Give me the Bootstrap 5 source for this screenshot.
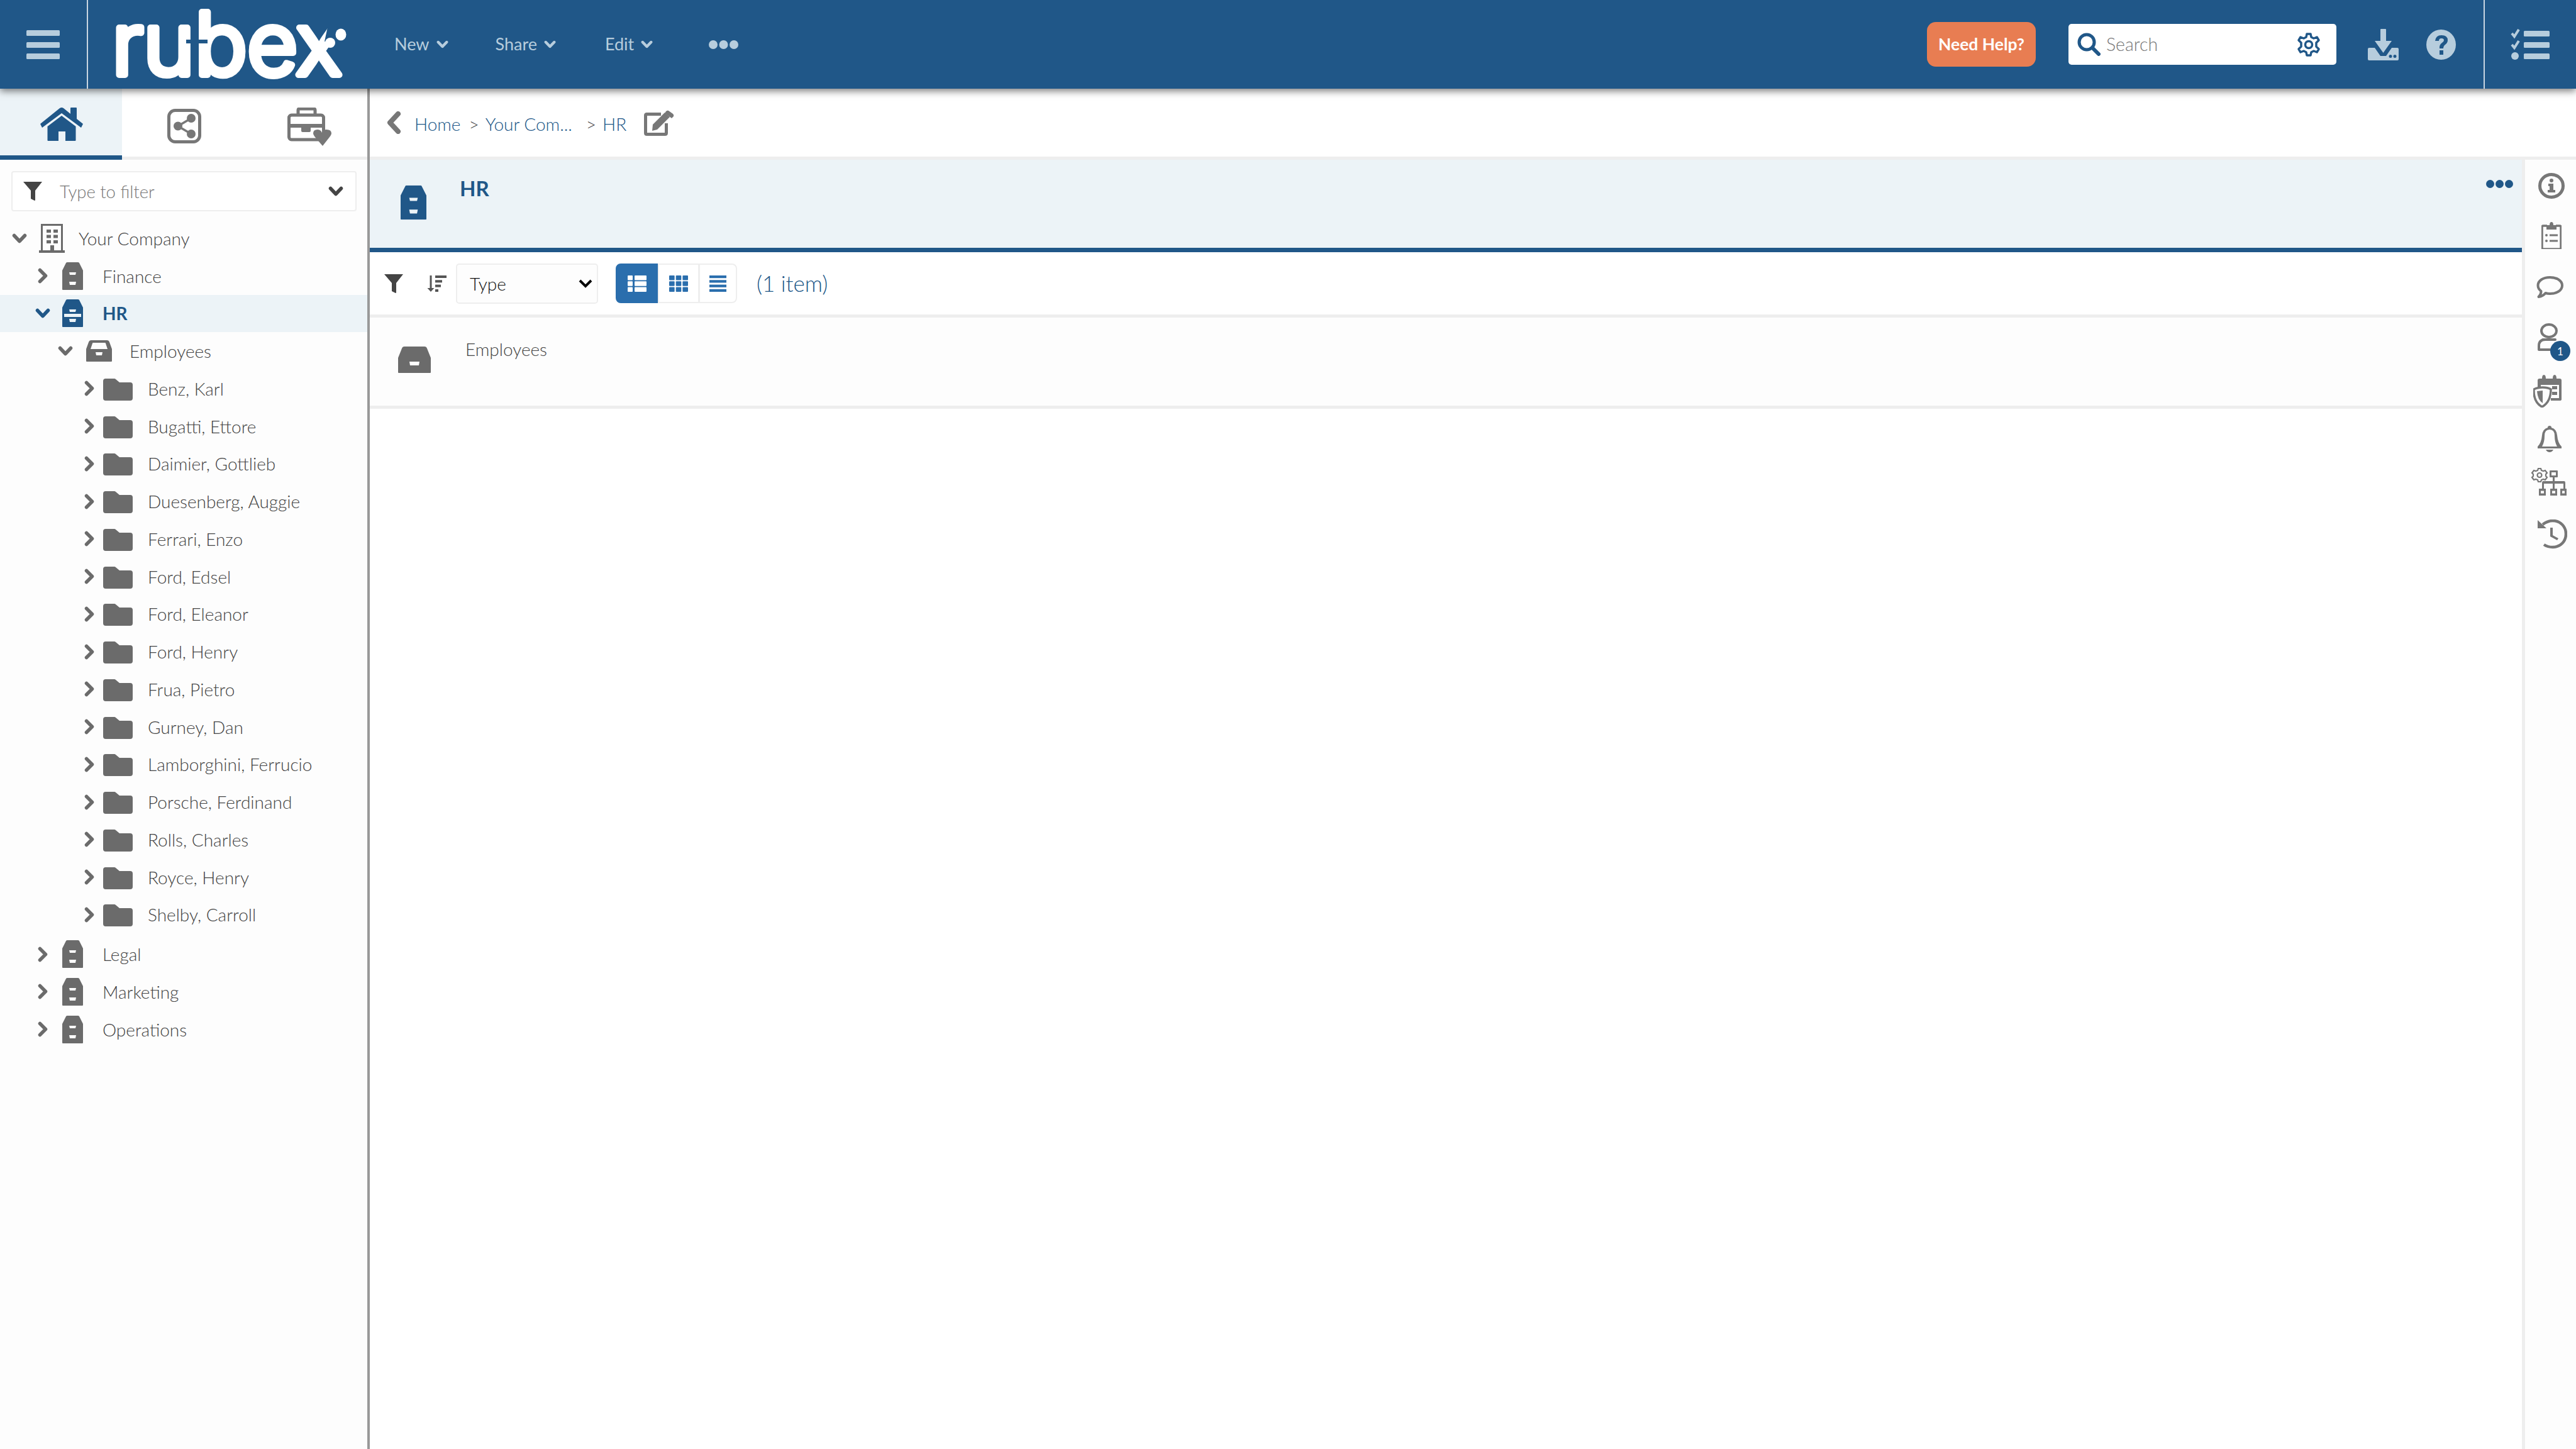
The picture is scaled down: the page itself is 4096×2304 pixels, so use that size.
<!doctype html>
<html lang="en">
<head>
<meta charset="utf-8">
<title>Rubex</title>
<link href="https://cdn.jsdelivr.net/npm/bootstrap@5.3.0/dist/css/bootstrap.min.css" rel="stylesheet">
<style>
:root{--rb:#205788;--pale:#b7cddd;--ico:#6b6b6b;--line:#eeeeee;--tint:#ecf3f7}
body{font-family:"Lato","Liberation Sans",sans-serif;font-weight:300;font-size:28px;color:#444;background:#fff;overflow:hidden}
svg{display:block;flex:none;fill:currentColor}
.top-bar{height:141px;background:var(--rb);color:var(--pale);position:relative;z-index:5;box-shadow:0 4px 11px rgba(0,0,0,.5);padding:0}
.burger-cell{width:140px;height:141px;border-right:2px solid #c9d6e2;padding-left:42px}
.logo-svg{margin-left:36px;overflow:visible}
.logo-word{font-family:"Inter",sans-serif;font-weight:300;font-size:138px;fill:#fff;stroke:#fff;stroke-width:10px;stroke-linejoin:round}
.logo-cut{fill:var(--rb)}
.menu-item{color:var(--pale);font-size:27px;font-weight:400;border:0;padding:0;background:none;display:flex;align-items:center;gap:11px}
.menu-item:hover{color:var(--pale)}
.mi-new{margin-left:66px}.mi-share{margin-left:75px}.mi-edit{margin-left:78px}.mi-more{margin-left:89px}
.help-btn{width:173px;height:71px;background:#e87d52;border:0;border-radius:14px;color:#fff;font-size:26.500px;font-weight:700;padding:0;margin-left:auto}
.help-btn:hover{background:#e87d52;color:#fff}
.search-box{width:426px;height:65px;background:#fff;border-radius:5px;margin-left:52px;padding:0 25px 0 14px;color:var(--rb)}
.search-txt{color:#777;font-size:28.500px;margin-left:9px;margin-right:auto}
.dl-ico{margin-left:50px}.q-ico{margin-left:44px}
.tasks-cell{margin-left:44px;width:147px;height:141px;border-left:2px solid #c9d6e2;padding-left:41px}
.app-body{height:2163px}
.side-col{width:588px;border-right:4px solid #999;background:#fdfdfd}
.tab-row{height:113px;background:#fff}
.tab-cell{height:113px;border-bottom:5px solid var(--line);color:#777}
.tab-1{width:194px;background:var(--tint);border-bottom:7px solid var(--rb);color:var(--rb);padding-left:64px;padding-top:30px}
.tab-2{width:191px;padding-left:72px;padding-top:32px}
.tab-3{flex:1;padding-left:72px;padding-top:30px}
.filter-box{margin:18px 17px 13px 18px;height:64px;border:2px solid var(--line);background:#fff;border-radius:4px;padding:0 18px 0 16px;color:#444}
.filter-txt{color:#777;font-size:27.500px;margin-left:27px;margin-right:auto;padding-top:2px}
.tree-list{list-style:none;margin:0;padding:0}
.t-row{height:59.75px;display:flex;align-items:center;color:#444;white-space:nowrap}
.t-row .ic{color:var(--ico)}
.t-row.on{background:var(--tint);color:var(--rb);font-weight:700}
.t-row.on .ic{color:var(--rb)}
.gap-top{margin-top:3px}
.chev-slot{width:28px;display:flex;justify-content:center;color:var(--ico)}
.on .chev-slot{color:var(--rb)}
.l0{padding-left:17px}.l0 .ic{margin-left:17px}.l0 .tx{margin-left:22px}
.l1{padding-left:54px}.l1 .ic{margin-left:17px}.l1 .tx{margin-left:31px}
.l2{padding-left:90px}.l2 .ic{margin-left:19px}.l2 .tx{margin-left:28px}
.l3{padding-left:128px}.l3 .ic{margin-left:8px;margin-top:3px}.l3 .tx{margin-left:24px}
.crumb-row{height:113px;border-bottom:5px solid var(--line);padding-left:26px;background:#fff}
.crumb-back{color:#777}
.crumb-list{margin:3px 0 0 21px;font-size:28px}
.crumb-list a{color:#205788;text-decoration:none}
.sep{color:#444;margin:0 10px 0 13px}
.sep-b{margin-left:22px}
.edit-ico{margin-left:28px;color:#777}
.work-col{border-right:5px solid var(--line)}
.title-band{height:147px;background:var(--tint);border-bottom:7px solid var(--rb);color:var(--rb)}
.title-ico{margin:40px 0 0 49px}
.title-txt{margin:21px 0 0 53px;font-size:33px;font-weight:700}
.title-dots{margin:32px 14px 0 auto}
.tool-row{height:104px;border-bottom:5px solid var(--line);padding-left:23px}
.tool-funnel{color:#444}
.tool-sort{margin-left:38px;color:#555}
.type-select{width:226px;height:64px;margin-left:15px;border:2px solid var(--line);border-radius:5px;background-color:#fdfdfd;font-family:inherit;font-weight:300;font-size:28px;color:#111;padding:0 40px 0 20px;background-size:22px 14px;background-position:right 7px center;background-image:url("data:image/svg+xml,%3Csvg xmlns='http://www.w3.org/2000/svg' viewBox='0 0 22 14'%3E%3Cpath d='M2 2l9 9 9-9' fill='none' stroke='%23000' stroke-width='4'/%3E%3C/svg%3E")}
.view-group{margin-left:28px;height:63px}
.view-btn{height:63px;padding:0;background:#fff;border:2px solid var(--line);color:#2a6ead;display:flex;align-items:center;justify-content:center;border-radius:8px}
.view-btn.w1{width:68px;background:#2a6ead;border-color:#2a6ead;color:#fff}
.view-btn.w2{width:66px}.view-btn.w3{width:61px}
.count-txt{margin-left:31px;font-size:35px;color:#205788}
.item-row{height:145px;border-bottom:5px solid var(--line);background:#fdfdfd}
.item-ico{margin:46px 0 0 45px;color:var(--ico)}
.item-txt{margin:29px 0 0 55px}
.rail{width:81px;background:#fdfdfd;color:#777}
.rail>*{position:relative}
.ri1{margin:21px 0 0 21px}.ri2{margin:37px 0 0 26px}.ri3{margin:43px 0 0 18px}.ri4{margin:37px 0 0 20px}
.ri5{margin:38px 0 0 13px}.ri6{margin:29px 0 0 20px}.ri7{margin:25px 0 0 9px}.ri8{margin:38px 0 0 20px}
.user-wrap{width:32px;height:44px}
.count-badge{position:absolute;left:20px;top:28px;width:32px;height:32px;border-radius:50%;background:var(--rb);color:#fff;font-size:17px;font-weight:400;display:flex;align-items:center;justify-content:center;padding:0}
</style>
</head>
<body>
<svg width="0" height="0" class="position-absolute">
<defs>
<symbol id="chev-r" viewBox="0 0 16 25"><path d="M3.500 3.500l9 9-9 9" fill="none" stroke="currentColor" stroke-width="5.500" stroke-linecap="round" stroke-linejoin="round"/></symbol>
<symbol id="chev-d" viewBox="0 0 24 16"><path d="M3.500 3.500l8.500 9 8.500-9" fill="none" stroke="currentColor" stroke-width="5.500" stroke-linecap="round" stroke-linejoin="round"/></symbol>
<symbol id="cabinet" viewBox="0 0 33 44"><path fill-rule="evenodd" d="M8 0h17q2 0 2.500 2L33 13v30a1 1 0 0 1-1 1H1a1 1 0 0 1-1-1V13L5.500 2Q6 0 8 0zM11 16l1 4h9l1-4zM11 31l1 5h9l1-5z"/></symbol>
<symbol id="drawer" viewBox="0 0 41 34"><path fill-rule="evenodd" d="M8 0h25q3 0 4 3l4 11v19a1 1 0 0 1-1 1H1a1 1 0 0 1-1-1V14L4 3q1-3 4-3zM7 14h27l-3-9a1 1 0 0 0-1-1H11a1 1 0 0 0-1 1zM15 19l1 5h9l1-5z"/></symbol>
<symbol id="drawer-solid" viewBox="0 0 52 42"><path fill-rule="evenodd" d="M10 0h32q3 0 4 3l6 15v23a1 1 0 0 1-1 1H1a1 1 0 0 1-1-1V18L6 3q1-3 4-3zM18 24l1 6h14l1-6z"/></symbol>
<symbol id="folder" viewBox="0 0 47 35"><path d="M4 0h14q1 0 2 1l6 5h17q4 0 4 4v21q0 4-4 4H4q-4 0-4-4V4q0-4 4-4z"/></symbol>
<symbol id="funnel" viewBox="0 0 30 30"><path d="M0 0h30L19 14v15q0 1-1 1l-6-3V14z"/></symbol>
</defs>
</svg>

<nav class="navbar top-bar d-flex flex-nowrap align-items-center justify-content-start">
  <div class="burger-cell d-flex align-items-center">
    <svg width="53" height="46" viewBox="0 0 53 46"><rect width="53" height="9" rx="1.500"/><rect y="19" width="53" height="9" rx="1.500"/><rect y="37" width="53" height="9" rx="1.500"/></svg>
  </div>
  <svg class="logo-svg" width="385" height="141" viewBox="0 0 385 141"><text class="logo-word" x="2" y="119" textLength="366" lengthAdjust="spacingAndGlyphs">rubex</text><rect class="logo-cut" x="120" y="63" width="34" height="6"/><path class="logo-cut" d="M346 38h39v42h-23l-2-14h-20z"/><ellipse cx="366" cy="55" rx="8.500" ry="9.500" fill="#fff"/><circle cx="349" cy="68" r="8" fill="#fff"/></svg>
  <button class="btn menu-item mi-new">New <svg width="19" height="13" viewBox="0 0 24 16"><use href="#chev-d"/></svg></button>
  <button class="btn menu-item mi-share">Share <svg width="19" height="13" viewBox="0 0 24 16"><use href="#chev-d"/></svg></button>
  <button class="btn menu-item mi-edit">Edit <svg width="19" height="13" viewBox="0 0 24 16"><use href="#chev-d"/></svg></button>
  <svg class="mi-more" width="47" height="14" viewBox="0 0 47 14"><circle cx="7" cy="7" r="7"/><circle cx="23.500" cy="7" r="7"/><circle cx="40" cy="7" r="7"/></svg>
  <button class="btn help-btn">Need Help?</button>
  <div class="search-box d-flex align-items-center">
    <svg width="37" height="37" viewBox="0 0 37 37"><circle cx="15" cy="15" r="12" fill="none" stroke="currentColor" stroke-width="5"/><path d="M24 24l10 10" stroke="currentColor" stroke-width="6" stroke-linecap="round"/></svg>
    <span class="search-txt">Search</span>
    <svg width="38" height="38" viewBox="0 0 38 38"><circle cx="19" cy="19" r="5.500" fill="none" stroke="currentColor" stroke-width="3.500"/><path d="M16 2h6l1 5 4 2 5-2 3 5-4 4v6l4 4-3 5-5-2-4 2-1 5h-6l-1-5-4-2-5 2-3-5 4-4v-6L3 12l3-5 5 2 4-2z" fill="none" stroke="currentColor" stroke-width="3.500" stroke-linejoin="round"/></svg>
  </div>
  <svg class="dl-ico" width="49" height="50" viewBox="0 0 49 50"><path d="M20 1q0-1 1-1h7q1 0 1 1v18h9L24.500 38 11 19h9z"/><path fill-rule="evenodd" d="M2 30h9l9 13h9l9-13h9q2 0 2 2v16q0 2-2 2H2q-2 0-2-2V32q0-2 2-2zM36 41a2.500 2.500 0 1 0 0 5 2.500 2.500 0 0 0 0-5zM43 41a2.500 2.500 0 1 0 0 5 2.500 2.500 0 0 0 0-5z"/></svg>
  <svg class="q-ico" width="47" height="48" viewBox="0 0 47 48"><path fill-rule="evenodd" d="M23.500 0a23.500 24 0 1 1 0 48 23.500 24 0 0 1 0-48zM21 33v7h6v-7zM14 18h6q0-4 4-4t4 3q0 2-3 4-4 3-4 7v2h6v-1q0-3 3-5 4-3 4-7 0-8-10-8-9 0-10 9z"/></svg>
  <div class="tasks-cell d-flex align-items-center">
    <svg width="62" height="50" viewBox="0 0 62 50"><path d="M2 7l4 5 7-11" fill="none" stroke="currentColor" stroke-width="4"/><path d="M2 25l4 5 7-11" fill="none" stroke="currentColor" stroke-width="4"/><circle cx="7" cy="43" r="6"/><rect x="21" y="3" width="41" height="9" rx="1.500"/><rect x="21" y="21" width="41" height="9" rx="1.500"/><rect x="21" y="39" width="41" height="9" rx="1.500"/></svg>
  </div>
</nav>

<div class="app-body d-flex">
  <aside class="side-col flex-shrink-0">
    <div class="tab-row d-flex">
      <div class="tab-cell tab-1">
        <svg width="68" height="53" viewBox="0 0 68 53"><path d="M31 1q3-2 6 0l11 9V1q0-1 1-1h8q1 0 1 1v17l10 8-3 6L34 9 3 32l-3-6z"/><path d="M34 13l22.500 17v22a1 1 0 0 1-1 1H40V38H29v15H12.500a1 1 0 0 1-1-1V30z"/></svg>
      </div>
      <div class="tab-cell tab-2">
        <svg width="54" height="55" viewBox="0 0 54 55"><rect x="2.500" y="2.500" width="49" height="50" rx="10" fill="none" stroke="currentColor" stroke-width="5"/><circle cx="38" cy="15" r="7"/><circle cx="17" cy="27.500" r="7"/><circle cx="38" cy="40" r="7"/><path d="M38 15L17 27.500 38 40" fill="none" stroke="currentColor" stroke-width="3.500"/></svg>
      </div>
      <div class="tab-cell tab-3">
        <svg width="70" height="61" viewBox="0 0 70 61"><path d="M17 11V4q0-2 2-2h23q2 0 2 2v7" fill="none" stroke="currentColor" stroke-width="5"/><rect x="2.500" y="12" width="55" height="39" rx="4" fill="none" stroke="currentColor" stroke-width="5"/><rect x="2" y="26" width="56" height="6"/><rect x="22" y="30" width="15" height="9" rx="2"/><path d="M56 61L44 47q-3-4-3-6 0-6 7-6 5 0 7 5 2-5 7-5 8 0 8 6 0 2-3 6z"/></svg>
      </div>
    </div>
    <div class="filter-box d-flex align-items-center">
      <svg class="tool-funnel" width="32" height="30"><use href="#funnel"/></svg>
      <span class="filter-txt">Type to filter</span>
      <svg width="26" height="16"><use href="#chev-d"/></svg>
    </div>
    <ul class="tree-list">
      <li class="t-row l0"><span class="chev-slot"><svg width="24" height="16"><use href="#chev-d"/></svg></span>
        <svg class="ic" width="41" height="46" viewBox="0 0 41 46"><path fill-rule="evenodd" d="M3 0h35v42h3v4H0v-4h3zM6 3v39h12v-8h6v8h11V3zM12 9h7v5h-7zM23 9h7v5h-7zM12 17.500h7v5h-7zM23 17.500h7v5h-7zM12 26h7v5h-7zM23 26h7v5h-7z"/></svg>
        <span class="tx">Your Company</span></li>
      <li class="t-row l1"><span class="chev-slot"><svg width="16" height="25"><use href="#chev-r"/></svg></span><svg class="ic" width="33" height="44"><use href="#cabinet"/></svg><span class="tx">Finance</span></li>
      <li class="t-row l1 on"><span class="chev-slot"><svg width="24" height="16"><use href="#chev-d"/></svg></span>
        <svg class="ic" width="33" height="44" viewBox="0 0 33 44"><use href="#cabinet" width="33" height="44"/><path d="M3 23h27v5H3z" fill="#ecf3f7"/></svg><span class="tx">HR</span></li>
      <li class="t-row l2"><span class="chev-slot"><svg width="24" height="16"><use href="#chev-d"/></svg></span><svg class="ic" width="41" height="34"><use href="#drawer"/></svg><span class="tx">Employees</span></li>
      <li class="t-row l3"><span class="chev-slot"><svg width="16" height="25"><use href="#chev-r"/></svg></span><svg class="ic" width="47" height="35"><use href="#folder"/></svg><span class="tx">Benz, Karl</span></li>
      <li class="t-row l3"><span class="chev-slot"><svg width="16" height="25"><use href="#chev-r"/></svg></span><svg class="ic" width="47" height="35"><use href="#folder"/></svg><span class="tx">Bugatti, Ettore</span></li>
      <li class="t-row l3"><span class="chev-slot"><svg width="16" height="25"><use href="#chev-r"/></svg></span><svg class="ic" width="47" height="35"><use href="#folder"/></svg><span class="tx">Daimier, Gottlieb</span></li>
      <li class="t-row l3"><span class="chev-slot"><svg width="16" height="25"><use href="#chev-r"/></svg></span><svg class="ic" width="47" height="35"><use href="#folder"/></svg><span class="tx">Duesenberg, Auggie</span></li>
      <li class="t-row l3"><span class="chev-slot"><svg width="16" height="25"><use href="#chev-r"/></svg></span><svg class="ic" width="47" height="35"><use href="#folder"/></svg><span class="tx">Ferrari, Enzo</span></li>
      <li class="t-row l3"><span class="chev-slot"><svg width="16" height="25"><use href="#chev-r"/></svg></span><svg class="ic" width="47" height="35"><use href="#folder"/></svg><span class="tx">Ford, Edsel</span></li>
      <li class="t-row l3"><span class="chev-slot"><svg width="16" height="25"><use href="#chev-r"/></svg></span><svg class="ic" width="47" height="35"><use href="#folder"/></svg><span class="tx">Ford, Eleanor</span></li>
      <li class="t-row l3"><span class="chev-slot"><svg width="16" height="25"><use href="#chev-r"/></svg></span><svg class="ic" width="47" height="35"><use href="#folder"/></svg><span class="tx">Ford, Henry</span></li>
      <li class="t-row l3"><span class="chev-slot"><svg width="16" height="25"><use href="#chev-r"/></svg></span><svg class="ic" width="47" height="35"><use href="#folder"/></svg><span class="tx">Frua, Pietro</span></li>
      <li class="t-row l3"><span class="chev-slot"><svg width="16" height="25"><use href="#chev-r"/></svg></span><svg class="ic" width="47" height="35"><use href="#folder"/></svg><span class="tx">Gurney, Dan</span></li>
      <li class="t-row l3"><span class="chev-slot"><svg width="16" height="25"><use href="#chev-r"/></svg></span><svg class="ic" width="47" height="35"><use href="#folder"/></svg><span class="tx">Lamborghini, Ferrucio</span></li>
      <li class="t-row l3"><span class="chev-slot"><svg width="16" height="25"><use href="#chev-r"/></svg></span><svg class="ic" width="47" height="35"><use href="#folder"/></svg><span class="tx">Porsche, Ferdinand</span></li>
      <li class="t-row l3"><span class="chev-slot"><svg width="16" height="25"><use href="#chev-r"/></svg></span><svg class="ic" width="47" height="35"><use href="#folder"/></svg><span class="tx">Rolls, Charles</span></li>
      <li class="t-row l3"><span class="chev-slot"><svg width="16" height="25"><use href="#chev-r"/></svg></span><svg class="ic" width="47" height="35"><use href="#folder"/></svg><span class="tx">Royce, Henry</span></li>
      <li class="t-row l3"><span class="chev-slot"><svg width="16" height="25"><use href="#chev-r"/></svg></span><svg class="ic" width="47" height="35"><use href="#folder"/></svg><span class="tx">Shelby, Carroll</span></li>
      <li class="t-row l1 gap-top"><span class="chev-slot"><svg width="16" height="25"><use href="#chev-r"/></svg></span><svg class="ic" width="33" height="44"><use href="#cabinet"/></svg><span class="tx">Legal</span></li>
      <li class="t-row l1"><span class="chev-slot"><svg width="16" height="25"><use href="#chev-r"/></svg></span><svg class="ic" width="33" height="44"><use href="#cabinet"/></svg><span class="tx">Marketing</span></li>
      <li class="t-row l1"><span class="chev-slot"><svg width="16" height="25"><use href="#chev-r"/></svg></span><svg class="ic" width="33" height="44"><use href="#cabinet"/></svg><span class="tx">Operations</span></li>
    </ul>
  </aside>

  <main class="flex-grow-1 d-flex flex-column">
    <div class="crumb-row d-flex align-items-center">
      <svg class="crumb-back" width="24" height="36" viewBox="0 0 24 36"><path d="M19 4L6 18l13 14" fill="none" stroke="currentColor" stroke-width="8" stroke-linecap="round" stroke-linejoin="round"/></svg>
      <div class="crumb-list d-flex align-items-center">
        <a href="#">Home</a><span class="sep">&gt;</span><a href="#">Your Com...</a><span class="sep sep-b">&gt;</span><a href="#">HR</a>
      </div>
      <svg class="edit-ico" width="48" height="41" viewBox="0 0 48 41"><path d="M27 6.500H4.500q-2 0-2 2v28q0 2 2 2h29q2 0 2-2V21" fill="none" stroke="currentColor" stroke-width="5"/><path d="M13 33l1-10L33 4l8 7-20 20z"/><path d="M35 2q2-2 4-1l7 5q2 2 1 4l-3 3-11-8z"/></svg>
    </div>
    <div class="d-flex flex-grow-1">
      <div class="work-col flex-grow-1">
        <div class="title-band d-flex">
          <svg class="title-ico" width="41" height="56" viewBox="0 0 33 44"><use href="#cabinet" width="33" height="44"/></svg>
          <span class="title-txt">HR</span>
          <svg class="title-dots" width="43" height="13" viewBox="0 0 43 13"><circle cx="6.500" cy="6.500" r="6.500"/><circle cx="21.500" cy="6.500" r="6.500"/><circle cx="36.500" cy="6.500" r="6.500"/></svg>
        </div>
        <div class="tool-row d-flex align-items-center">
          <svg class="tool-funnel" width="30" height="30"><use href="#funnel"/></svg>
          <svg class="tool-sort" width="31" height="26" viewBox="0 0 31 26"><path d="M4.500 0h3v20h4l-5.500 6L.5 20h4z"/><rect x="13" width="18" height="4"/><rect x="13" y="7.300" width="11" height="4"/><rect x="13" y="14.600" width="9" height="4"/><rect x="13" y="22" width="5" height="4"/></svg>
          <select class="form-select type-select"><option>Type</option></select>
          <div class="btn-group view-group" role="group">
            <button class="btn view-btn w1"><svg width="30" height="26" viewBox="0 0 30 26"><rect width="8" height="7.500" rx="1"/><rect x="11" width="19" height="7.500" rx="1"/><rect y="9.300" width="8" height="7.500" rx="1"/><rect x="11" y="9.300" width="19" height="7.500" rx="1"/><rect y="18.500" width="8" height="7.500" rx="1"/><rect x="11" y="18.500" width="19" height="7.500" rx="1"/></svg></button>
            <button class="btn view-btn w2"><svg width="30" height="26" viewBox="0 0 30 26"><rect width="8.600" height="7.500" rx="1"/><rect x="10.700" width="8.600" height="7.500" rx="1"/><rect x="21.400" width="8.600" height="7.500" rx="1"/><rect y="9.300" width="8.600" height="7.500" rx="1"/><rect x="10.700" y="9.300" width="8.600" height="7.500" rx="1"/><rect x="21.400" y="9.300" width="8.600" height="7.500" rx="1"/><rect y="18.500" width="8.600" height="7.500" rx="1"/><rect x="10.700" y="18.500" width="8.600" height="7.500" rx="1"/><rect x="21.400" y="18.500" width="8.600" height="7.500" rx="1"/></svg></button>
            <button class="btn view-btn w3"><svg width="27" height="26" viewBox="0 0 27 26"><rect width="27" height="4.200"/><rect y="7.300" width="27" height="4.200"/><rect y="14.600" width="27" height="4.200"/><rect y="21.800" width="27" height="4.200"/></svg></button>
          </div>
          <span class="count-txt">(1 item)</span>
        </div>
        <div class="item-row d-flex">
          <svg class="item-ico" width="52" height="42"><use href="#drawer-solid"/></svg>
          <span class="item-txt">Employees</span>
        </div>
      </div>
      <div class="rail flex-shrink-0 d-flex flex-column align-items-start">
        <svg class="ri1" width="42" height="41" viewBox="0 0 42 41"><ellipse cx="21" cy="20.500" rx="18.500" ry="18" fill="none" stroke="currentColor" stroke-width="5"/><circle cx="21" cy="12" r="3"/><path d="M16 17h8v10h3v4H15v-4h3v-6h-2z"/></svg>
        <svg class="ri2" width="32" height="43" viewBox="0 0 32 43"><path d="M9 6H3q-2 0-2 2v33q0 2 2 2h26q2 0 2-2V8q0-2-2-2h-6" fill="none" stroke="currentColor" stroke-width="3.500"/><path d="M8 5h5q0-5 3-5t3 5h5v7H8z"/><circle cx="8" cy="21" r="2"/><circle cx="8" cy="30" r="2"/><rect x="13" y="19.500" width="13" height="3"/><rect x="13" y="28.500" width="13" height="3"/></svg>
        <svg class="ri3" width="43" height="38" viewBox="0 0 43 38"><path d="M21.500 2C32 2 41 7 41 15s-9 13-19.500 13q-4 0-7-1-4 5-11 6 4-4 4-9-5-4-5-9C2.500 7 11 2 21.500 2z" fill="none" stroke="currentColor" stroke-width="4" stroke-linejoin="round"/></svg>
        <div class="ri4 user-wrap">
          <svg width="32" height="44" viewBox="0 0 32 44"><ellipse cx="18" cy="12" rx="12" ry="10" fill="none" stroke="currentColor" stroke-width="4"/><path d="M8 26h20M2 42v-6q0-10 10-10M2 42h22" fill="none" stroke="currentColor" stroke-width="4" stroke-linecap="round"/></svg>
          <span class="badge count-badge">1</span>
        </div>
        <svg class="ri5" width="46" height="52" viewBox="0 0 46 52"><path d="M14 6q0-6 3-6t3 6h11q0-6 3-6t3 6h5q3 0 3 3v30q0 2-3 2H28v-4h13V16H12v5H7V9q0-3 3-3z"/><rect x="30" y="18" width="8" height="5"/><rect x="30" y="27" width="8" height="5"/><path d="M15 20q8 0 13 3 0 20-14 28Q0 43 1 23q6-3 14-3z" fill="#fdfdfd" stroke="currentColor" stroke-width="3.500"/><path d="M15 25v20q-8-5-9-19z"/></svg>
        <svg class="ri6" width="38" height="42" viewBox="0 0 38 42"><path d="M19 0q3 0 3 3 8 2 9 12 1 12 7 18v3H0v-3q6-6 7-18 1-10 9-12 0-3 3-3zM19 6q-8 0-8 10 0 10-4 17h24q-4-7-4-17 0-10-8-10zM13 38h12q-2 4-6 4t-6-4z"/></svg>
        <svg class="ri7" width="57" height="44" viewBox="0 0 57 44"><path d="M12 1h4l1 3 3 1 3-1 3 4-2 2v3l2 2-3 4-3-1-3 1-1 3h-4l-1-3-3-1-3 1-3-4 2-2v-3L2 8l3-4 3 1 3-1z" fill="none" stroke="currentColor" stroke-width="2.200"/><circle cx="14" cy="11.500" r="3.500" fill="none" stroke="currentColor" stroke-width="2.200"/><path fill-rule="evenodd" d="M31 4h11q1 0 1 1v9q0 1-1 1h-4v6h15q2 0 2 3v9h-3v-8H38v8h-3v-8H21v8h-3v-9q0-3 2-3h15v-6h-4q-1 0-1-1V5q0-1 1-1zM33 7v5h7V7z"/><path fill-rule="evenodd" d="M13 33h11v11H13zM16 36.500v4h5v-4zM31 33h11v11H31zM34 36.500v4h5v-4zM47 33h10v11H47zM50 36.500v4h4v-4z"/></svg>
        <svg class="ri8" width="47" height="47" viewBox="0 0 47 47"><path d="M0 3l14 13H0z" transform="translate(0 -2)"/><path d="M8 8q8-6 16-6c12 0 21 9 21 21s-9 21-21 21q-8 0-14-4" fill="none" stroke="currentColor" stroke-width="4.500"/><path d="M20 13h4v12l9 5-2 3-11-6z"/></svg>
      </div>
    </div>
  </main>
</div>
<script src="https://cdn.jsdelivr.net/npm/bootstrap@5.3.0/dist/js/bootstrap.bundle.min.js"></script>
</body>
</html>
